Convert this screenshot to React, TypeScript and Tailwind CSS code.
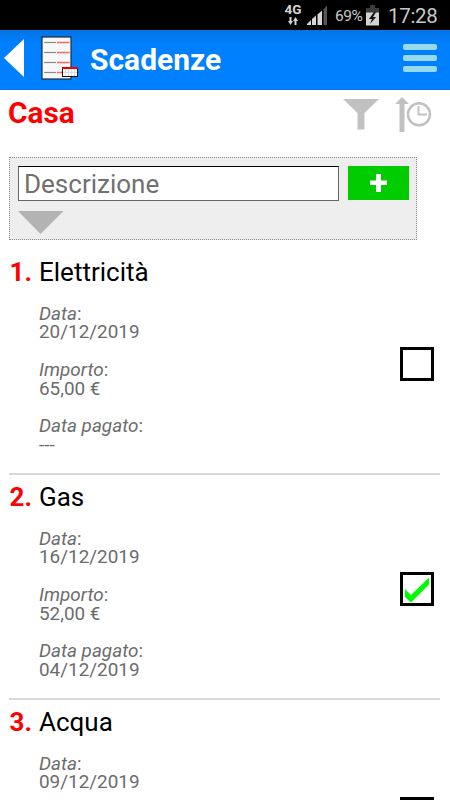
import React from "react";

type Deadline = { n: number; title: string; date: string; amount?: string; paid?: string; done: boolean };

const deadlines: Deadline[] = [
  { n: 1, title: "Elettricità", date: "20/12/2019", amount: "65,00 €", paid: "---", done: false },
  { n: 2, title: "Gas", date: "16/12/2019", amount: "52,00 €", paid: "04/12/2019", done: true },
  { n: 3, title: "Acqua", date: "09/12/2019", done: false },
];

function StatusBar() {
  return (
    <div className="flex h-[30px] shrink-0 items-start bg-black pl-[284px] text-[#c8c8c8]">
      <div className="flex w-[18px] flex-col items-center pt-[3px]">
        <span className="text-[13.500px] leading-[13px] font-bold text-[#d4d4d4]">4G</span>
        <svg width="12" height="8" viewBox="0 0 12 8" fill="#d4d4d4" className="mt-px">
          <path d="M2.500 0h2v4h1.500L3.500 8 1 4h1.500zM7.500 8h2V4h1.500L8.500 0 6 4h1.500z" />
        </svg>
      </div>
      <svg width="21" height="20" viewBox="0 0 21 20" className="mt-[5px] ml-[5px]">
        <path d="M0 20v-1l4-4v5z" fill="#d8d8d8" />
        <path d="M5 20v-6l4-3.500v9.500z" fill="#d8d8d8" />
        <path d="M10.500 20v-10.500l4.500-4v14.500z" fill="#d8d8d8" />
        <path d="M16.500 20v-15.500l3.500-4v19.500z" fill="#555" />
      </svg>
      <span className="mt-[6px] ml-[7px] w-[29px] text-[15.500px] leading-[20px] tracking-[-0.500px] whitespace-nowrap">69%</span>
      <svg width="13" height="21" viewBox="0 0 13 21" className="mt-[4.500px] ml-[2px]">
        <path d="M4 0h5v3h4v5H0V3h4z" fill="#3b3b3b" />
        <path d="M0 7.500h13V20.500H0z" fill="#d2d2d2" />
        <path d="M8 7 3 14h3l-2 5 6-7H7l3-5z" fill="#111" />
      </svg>
      <span className="mt-[4px] ml-[9px] text-[20.500px] leading-[24px] tracking-[-0.300px] whitespace-nowrap">17:28</span>
    </div>
  );
}

function DocumentIcon() {
  return (
    <svg width="38" height="44" viewBox="0 0 38 44" className="ml-[17px]">
      <rect x="1" y="1" width="29" height="42" fill="#f8f8f8" stroke="#192c40" strokeWidth="1.200" />
      {[6.500, 16.500, 26.500, 36.500].map((y) => (
        <g key={y}>
          <path d={`M3 ${y}H15`} stroke="#8a8a8a" strokeWidth="1.200" />
          <path d={`M3 ${y}h1.500`} stroke="#4c4" strokeWidth="1.200" />
          <path d={`M16 ${y}H28.500`} stroke="#ff5555" strokeWidth="1.700" strokeDasharray="2.500 .3" />
        </g>
      ))}
      <rect x="21.500" y="31.500" width="15" height="9" fill="#fff" stroke="#111" />
      <path d="M21 32h16" stroke="#e00" strokeWidth="2" />
      <path d="M24.500 33v7M27.500 33v7M30.500 33v7M33.500 33v7M22 36.500h14" stroke="#c9c9c9" strokeWidth=".6" />
    </svg>
  );
}

function Header() {
  return (
    <header className="flex h-[60px] shrink-0 items-start border-b border-[#0872e6] bg-linear-to-b from-[#0573e4] to-[#0080ff] to-25% pt-[6px] pl-[4px]">
      <svg width="20" height="38" viewBox="0 0 20 38" className="mt-[3px]">
        <path d="M20 0v38L0 19z" fill="#fff" />
      </svg>
      <DocumentIcon />
      <h1 className="mt-[7px] ml-[11px] text-[30px] leading-[34px] font-bold text-white">Scadenze</h1>
      <div className="mt-[8px] mr-[13px] ml-auto flex flex-col gap-[5px]">
        <span className="h-[6px] w-[34px] rounded-[2px] bg-[#97d9ed]" />
        <span className="h-[6px] w-[34px] rounded-[2px] bg-[#97d9ed]" />
        <span className="h-[6px] w-[34px] rounded-[2px] bg-[#97d9ed]" />
      </div>
    </header>
  );
}

function Checkbox({ done }: { done: boolean }) {
  return (
    <div className="h-[34px] w-[34px] border-[3px] border-black bg-white">
      {done && (
        <svg width="28" height="28" viewBox="0 0 28 28">
          <path d="M2 14 8 20 26 2.500V9.500L8 27.500 2 22z" fill="#00fa00" />
        </svg>
      )}
    </div>
  );
}

function Field({ label, value }: { label: string; value: string }) {
  return (
    <div className="mb-[18.750px] text-[18.900px] leading-[18.750px] text-[#6c6c6c]">
      <div><i>{label}</i>:</div>
      <div>{value}</div>
    </div>
  );
}

function Item({ item }: { item: Deadline }) {
  return (
    <li className="mr-[10px] ml-[9px] h-[225px] shrink-0 border-b-2 border-[#d9d9d9]">
      <div className="flex h-full items-start">
        <span className="mt-[5px] w-[30px] pl-[0.600px] text-[26px] leading-[34px] font-bold text-[#f00]">{item.n}.</span>
        <div className="grow">
          <h2 className="mt-[5px] text-[26px] leading-[34px] text-black">{item.title}</h2>
          <div className="mt-[15.600px]">
            <Field label="Data" value={item.date} />
            {item.amount && <Field label="Importo" value={item.amount} />}
            {item.paid && <Field label="Data pagato" value={item.paid} />}
          </div>
        </div>
        <div className="mr-[6px] pt-[97px]"><Checkbox done={item.done} /></div>
      </div>
    </li>
  );
}

export default function App() {
  return (
    <div className="flex h-[800px] w-[450px] flex-col overflow-hidden bg-white font-['Roboto',sans-serif]">
      <StatusBar />
      <Header />
      <div className="flex h-[67px] shrink-0 items-start pl-[8px]">
        <h2 className="mt-[6px] text-[29.800px] leading-[34px] font-bold text-[#f00]">Casa</h2>
        <svg width="36" height="31" viewBox="0 0 36 31" className="mt-[9px] mr-[16px] ml-auto">
          <path d="M0 0h36L21.500 14v16.500h-7V14z" fill="#c1c1c1" />
        </svg>
        <svg width="37" height="36" viewBox="0 0 37 36" className="mt-[6px] mr-[18px]">
          <path d="M7 1 14 8H9.500V36H4.500V8H0z" fill="#c1c1c1" />
          <circle cx="24" cy="18.300" r="11" fill="none" stroke="#c1c1c1" strokeWidth="2.500" />
          <path d="M23.500 10V18.500h8.500" fill="none" stroke="#c1c1c1" strokeWidth="2" />
        </svg>
      </div>
      <section className="ml-[9px] h-[83px] w-[408px] shrink-0 border border-dotted border-[#888] bg-[#eee] pt-[8px] pl-[8px]">
        <div className="flex items-start">
          <div className="h-[35px] w-[321px] border border-[#666] border-t-black bg-white pl-[5px] text-[26px] leading-[34px] text-[#707070]">Descrizione</div>
          <button className="ml-[9px] flex h-[34px] w-[61px] items-center justify-center bg-[#00cc00]">
            <svg width="17" height="18" viewBox="0 0 17 18"><path d="M6 0h5v6.500h6v4.500h-6v7H6v-7H0V6.500h6z" fill="#fff" /></svg>
          </button>
        </div>
        <svg width="46" height="23" viewBox="0 0 46 23" className="mt-[10px]"><path d="M0 0h45.500L22.500 23z" fill="#b3b3b3" /></svg>
      </section>
      <ul className="flex flex-col pt-[10px]">
        {deadlines.map((item) => <Item key={item.n} item={item} />)}
      </ul>
    </div>
  );
}
